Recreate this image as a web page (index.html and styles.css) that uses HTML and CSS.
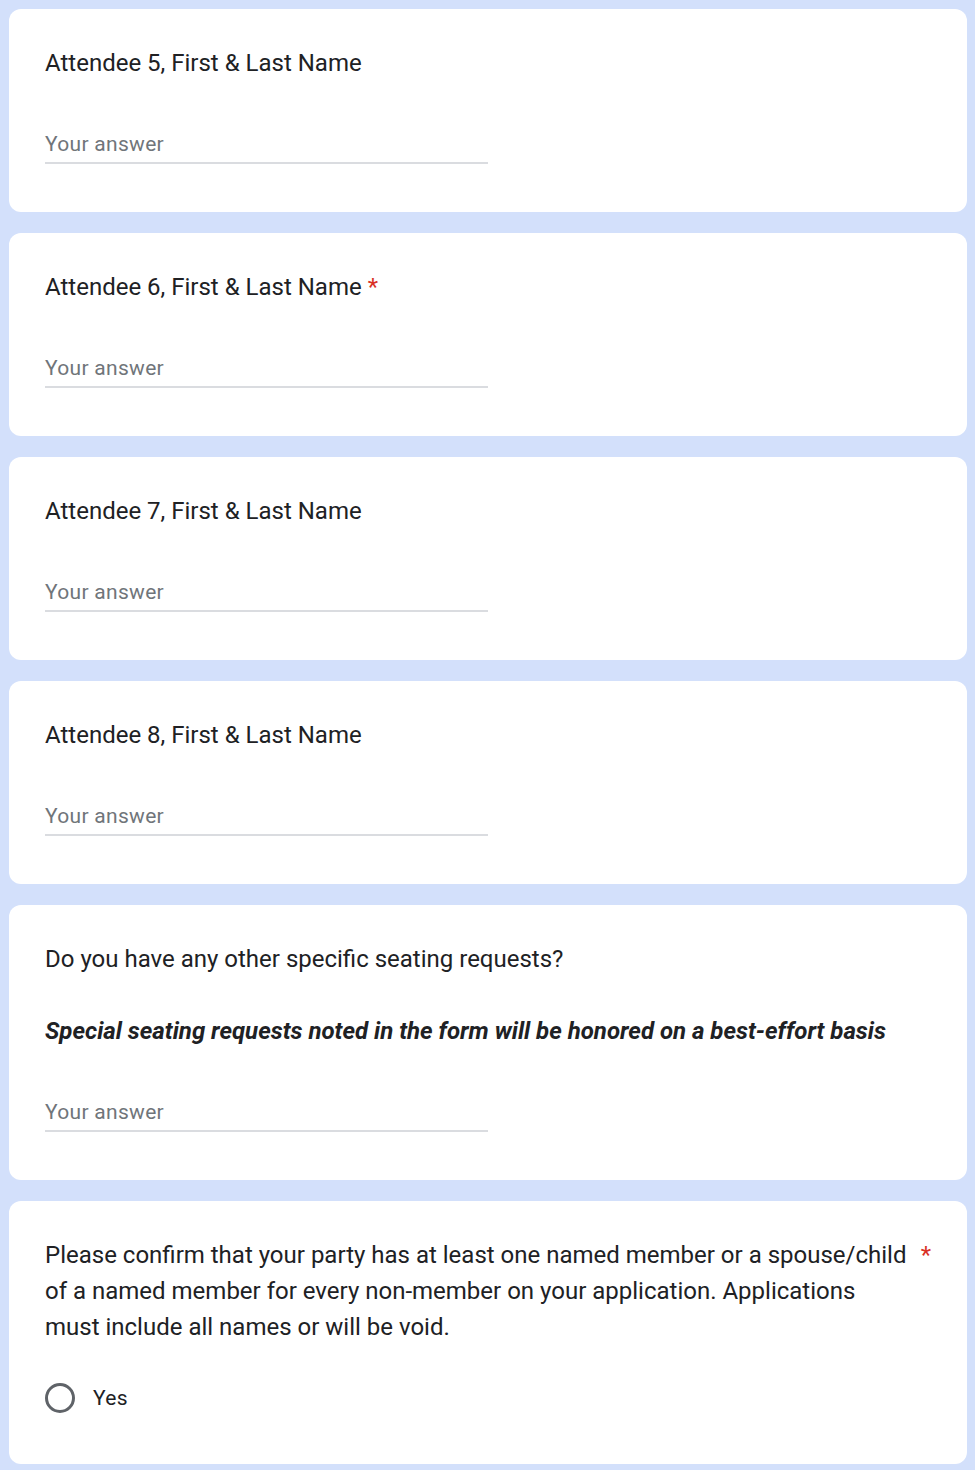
FILE: index.html
```html
<!DOCTYPE html>
<html lang="en">
<head>
<meta charset="utf-8">
<title>Form</title>
<link rel="stylesheet" href="styles.css">
</head>
<body>
<main class="form">
  <section class="card">
    <div class="q-title"><span class="q-text">Attendee 5, First &amp; Last Name</span></div>
    <div class="answer"><span class="placeholder">Your answer</span></div>
  </section>
  <section class="card">
    <div class="q-title"><span class="q-text">Attendee 6, First &amp; Last Name</span><span class="req">*</span></div>
    <div class="answer"><span class="placeholder">Your answer</span></div>
  </section>
  <section class="card">
    <div class="q-title"><span class="q-text">Attendee 7, First &amp; Last Name</span></div>
    <div class="answer"><span class="placeholder">Your answer</span></div>
  </section>
  <section class="card">
    <div class="q-title"><span class="q-text">Attendee 8, First &amp; Last Name</span></div>
    <div class="answer"><span class="placeholder">Your answer</span></div>
  </section>
  <section class="card">
    <div class="q-title"><span class="q-text">Do you have any other specific seating requests?</span></div>
    <div class="q-desc">Special seating requests noted in the form will be honored on a best-effort basis</div>
    <div class="answer answer-after-desc"><span class="placeholder">Your answer</span></div>
  </section>
  <section class="card">
    <div class="q-title"><span class="q-text">Please confirm that your party has at least one named member or a spouse/child of a named member for every non-member on your application. Applications must include all names or will be void.</span><span class="req">*</span></div>
    <div class="options">
      <label class="option"><span class="radio"></span><span class="opt-text">Yes</span></label>
    </div>
  </section>
</main>
</body>
</html>
```

FILE: styles.css
```css
html, body {
  margin: 0;
  padding: 0;
}
body {
  background: #d3e0fb;
  font-family: Roboto, "Noto Sans", Arial, sans-serif;
  color: #202124;
}
.form {
  display: flex;
  flex-direction: column;
  gap: 21px;
  padding: 9px 8px 20px 9px;
}
.card {
  background: #ffffff;
  border-radius: 12px;
  padding: 36px 36px 48px 36px;
}
.q-title {
  display: flex;
  align-items: flex-start;
  font-size: 24px;
  line-height: 36px;
  letter-spacing: 0;
  color: #202124;
}
.q-text {
  flex: 0 1 auto;
}
.req {
  flex: 0 0 auto;
  color: #d93025;
  padding-left: 6px;
}
.q-desc {
  margin-top: 36px;
  font-size: 24px;
  line-height: 36px;
  font-weight: 700;
  font-style: italic;
  color: #202124;
}
.answer {
  margin-top: 48px;
  width: 443px;
  font-size: 21px;
  line-height: 30px;
  padding-bottom: 3px;
  border-bottom: 2px solid #dadce0;
}
.answer-after-desc {
  margin-top: 48px;
}
.placeholder {
  letter-spacing: 0.3px;
  color: #70757a;
}
.options {
  margin-top: 35px;
}
.option {
  display: flex;
  align-items: center;
  height: 36px;
  gap: 18px;
  font-size: 21px;
}
.radio {
  box-sizing: border-box;
  width: 30px;
  height: 30px;
  border: 3px solid #5f6368;
  border-radius: 50%;
}
.opt-text {
  letter-spacing: 0.3px;
  color: #202124;
}
```
